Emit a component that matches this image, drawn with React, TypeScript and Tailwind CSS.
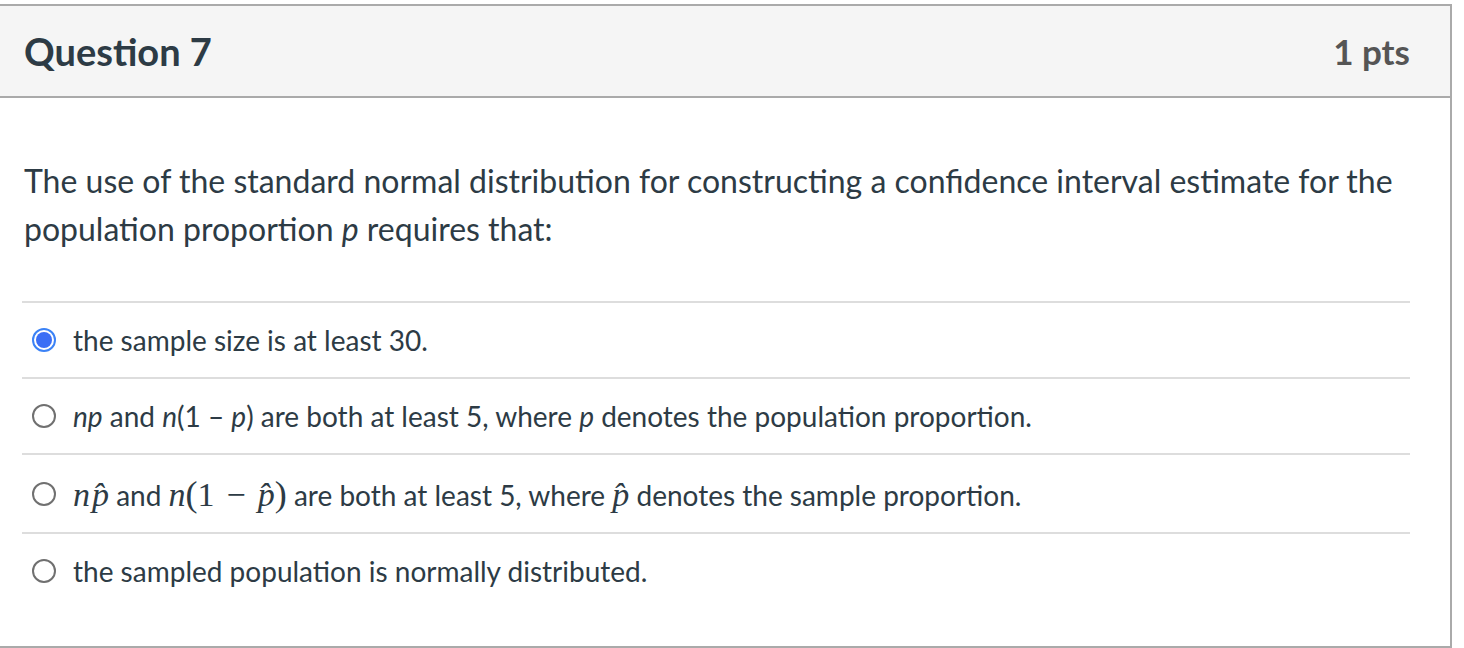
import React from "react";

const lato = { fontFamily: "Lato, 'Open Sans', sans-serif" };

function Radio({ checked }: { checked?: boolean }) {
  if (checked) {
    return (
      <span className="flex h-[24px] w-[24px] shrink-0 items-center justify-center rounded-full border-[2px] border-[#3b82f6] bg-white">
        <span className="h-[16px] w-[16px] rounded-full bg-[#3b6ef5]" />
      </span>
    );
  }
  return (
    <span className="h-[24px] w-[24px] shrink-0 rounded-full border-2 border-[#707070] bg-white" />
  );
}

const mathCls = "font-['Liberation_Serif','DejaVu_Serif',serif] text-[34px]";

// p with a combining circumflex, as the math renderer shows it
const pHat = <i>p{"\u0302"}</i>;

const OPTIONS: { checked?: boolean; h: string; body: React.ReactNode }[] = [
  { checked: true, h: "h-[76px]", body: <>the sample size is at least 30.</> },
  {
    h: "h-[76px]",
    body: (
      <>
        <i>np</i> and <i>n</i>(1 – <i>p</i>) are both at least 5, where <i>p</i> denotes the
        population proportion.
      </>
    ),
  },
  {
    h: "h-[79px]",
    body: (
      <>
        <span className={mathCls}>
          <i>n</i>
          <span className="ml-[2px]">{pHat}</span>
        </span>{" "}
        and{" "}
        <span className={mathCls}>
          <i>n</i>
          <span className="text-[36px]">(</span>1<span className="mx-[12px]">−</span>
          {pHat}
          <span className="text-[36px]">)</span>
        </span>{" "}
        are both at least 5, where <span className={mathCls}>{pHat}</span> denotes the sample
        proportion.
      </>
    ),
  },
  { h: "h-[76px]", body: <>the sampled population is normally distributed.</> },
];

export default function App() {
  return (
    <div className="h-[648px] w-[1464px] overflow-hidden bg-white pt-[4px]" style={lato}>
      <div className="h-[644px] w-[1452px] border-y-2 border-r-2 border-[#aaaaaa]">
        <div className="flex h-[92px] items-center justify-between border-b-2 border-[#aaaaaa] bg-[#f5f5f5] pl-[24px] pr-[40px]">
          <h2 className="text-[38px] font-bold text-[#2d3b45]">Question 7</h2>
          <span className="text-[35px] font-bold text-[#555555]">1 pts</span>
        </div>
        <p className="mt-[59px] pl-[24px] pr-[40px] text-[32px] leading-[48px] text-[#2d3b45]">
          The use of the standard normal distribution for constructing a confidence interval
          estimate for the population proportion <i>p</i> requires that:
        </p>
        <div className="ml-[22px] mt-[48px] w-[1388px]">
          {OPTIONS.map((o, i) => (
            <div
              key={i}
              className={`flex items-center gap-[17px] border-t-2 border-[#dddddd] pl-[10px] text-[28px] text-[#2d3b45] ${o.h}`}
            >
              <Radio checked={o.checked} />
              <span>{o.body}</span>
            </div>
          ))}
        </div>
      </div>
    </div>
  );
}
